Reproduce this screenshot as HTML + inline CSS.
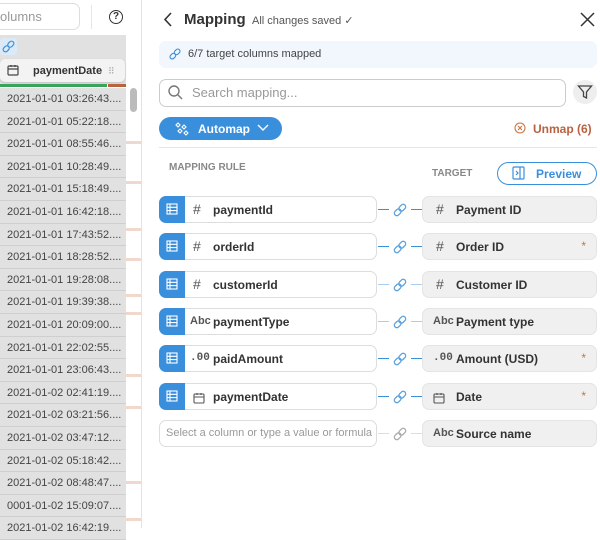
<!DOCTYPE html><html><head><style>
*{box-sizing:border-box;margin:0;padding:0}
body{width:600px;height:528px;overflow:hidden;background:#fff;font-family:"Liberation Sans",sans-serif;position:relative;color:#333}
.a{position:absolute}
.cell{position:absolute;left:0;width:126px;height:22.6px;background:#e1e1e1;border-bottom:1px solid #cfcfcf;font-size:11px;color:#444;padding:5px 0 0 7px;white-space:nowrap;overflow:hidden}
.lb{position:absolute;left:159px;width:218px;height:27px;border:1px solid #ddd;border-radius:7px;background:#fff}
.lb .sq{position:absolute;left:-1px;top:-1px;width:26px;height:27px;background:#3a8fdc;border-radius:7px 0 0 7px}
.ty{position:absolute;font-size:11px;font-weight:bold;color:#555}
.rb{position:absolute;left:422px;width:175px;height:27px;border:1px solid #e4e4e4;border-radius:7px;background:#f0f0f0}
.st{position:absolute;right:10px;top:5px;color:#c8763f;font-size:12px}
.ln{position:absolute;height:1px;background:#3a8fdc}
</style></head><body>
<div class="a" style="left:-20px;top:3px;width:100px;height:27px;border:1px solid #ddd;border-radius:7px"></div>
<div class="a" style="left:0;top:9px;font-size:13px;color:#999">olumns</div>
<div class="a" style="left:91px;top:5px;width:1px;height:24px;background:#e5e5e5"></div>
<div class="a" style="left:109px;top:10px;width:14px;height:14px;border:1.5px solid #333;border-radius:50%;font-size:10px;font-weight:bold;text-align:center;line-height:12px">?</div>
<div class="a" style="left:0;top:35px;width:126px;height:20px;background:#e1e1e1"></div>
<div class="a" style="left:0;top:38px;width:17px;height:17px;background:#dceaf7;border-radius:3px"></div>
<svg class="a" style="left:1px;top:39px" width="15" height="15" viewBox="0 0 16 16" fill="none" stroke="#3a8fdc" stroke-width="1.3"><g transform="rotate(-45 8 8)"><rect x="1" y="5.5" width="7" height="5" rx="2.5"/><rect x="8" y="5.5" width="7" height="5" rx="2.5"/></g></svg>
<div class="a" style="left:0;top:55px;width:126px;height:29px;background:#e1e1e1"></div>
<div class="a" style="left:0;top:59px;width:125px;height:23px;background:#f3f3f3;border-radius:5px;box-shadow:0 1px 2px rgba(0,0,0,.15)"></div>
<svg class="a" style="left:7px;top:64px" width="12" height="12" viewBox="0 0 12 12" fill="none" stroke="#444" stroke-width="1.2"><rect x="1" y="2" width="10" height="9" rx="1"/><path d="M1 5h10M4 1v2M8 1v2"/></svg>
<div class="a" style="left:33px;top:65px;font-size:11px;font-weight:bold;color:#333">paymentDate</div>
<div class="a" style="left:108px;top:66px;color:#aaa;font-size:9px;letter-spacing:-1px">⠿</div>
<div class="a" style="left:0;top:84px;width:107px;height:3px;background:#3aa35b"></div>
<div class="a" style="left:108px;top:84px;width:18px;height:3px;background:#b9623f"></div>
<div class="a" style="left:130px;top:88px;width:7px;height:24px;background:#bbb;border-radius:4px"></div>
<div class="a" style="left:126px;top:141px;width:15px;height:3px;background:#f0d8cc"></div>
<div class="a" style="left:126px;top:181px;width:15px;height:3px;background:#f0d8cc"></div>
<div class="a" style="left:126px;top:228px;width:15px;height:3px;background:#f0d8cc"></div>
<div class="a" style="left:126px;top:258px;width:15px;height:3px;background:#f0d8cc"></div>
<div class="a" style="left:126px;top:294px;width:15px;height:3px;background:#f0d8cc"></div>
<div class="a" style="left:126px;top:312px;width:15px;height:3px;background:#f0d8cc"></div>
<div class="a" style="left:126px;top:374px;width:15px;height:3px;background:#f0d8cc"></div>
<div class="a" style="left:126px;top:406px;width:15px;height:3px;background:#f0d8cc"></div>
<div class="a" style="left:126px;top:481px;width:15px;height:3px;background:#f0d8cc"></div>
<div class="a" style="left:126px;top:518px;width:15px;height:3px;background:#f0d8cc"></div>
<div class="a" style="left:141px;top:0;width:1px;height:528px;background:#e3e3e3"></div>
<div class="cell" style="top:88px">2021-01-01 03:26:43....</div>
<div class="cell" style="top:110.6px">2021-01-01 05:22:18....</div>
<div class="cell" style="top:133.2px">2021-01-01 08:55:46....</div>
<div class="cell" style="top:155.8px">2021-01-01 10:28:49....</div>
<div class="cell" style="top:178.4px">2021-01-01 15:18:49....</div>
<div class="cell" style="top:201px">2021-01-01 16:42:18....</div>
<div class="cell" style="top:223.6px">2021-01-01 17:43:52....</div>
<div class="cell" style="top:246.2px">2021-01-01 18:28:52....</div>
<div class="cell" style="top:268.8px">2021-01-01 19:28:08....</div>
<div class="cell" style="top:291.4px">2021-01-01 19:39:38....</div>
<div class="cell" style="top:314px">2021-01-01 20:09:00....</div>
<div class="cell" style="top:336.6px">2021-01-01 22:02:55....</div>
<div class="cell" style="top:359.2px">2021-01-01 23:06:43....</div>
<div class="cell" style="top:381.8px">2021-01-02 02:41:19....</div>
<div class="cell" style="top:404.4px">2021-01-02 03:21:56....</div>
<div class="cell" style="top:427px">2021-01-02 03:47:12....</div>
<div class="cell" style="top:449.6px">2021-01-02 05:18:42....</div>
<div class="cell" style="top:472.2px">2021-01-02 08:48:47....</div>
<div class="cell" style="top:494.8px">0001-01-02 15:09:07....</div>
<div class="cell" style="top:517.4px">2021-01-02 16:42:19....</div>

<svg class="a" style="left:163px;top:12px" width="10" height="15" viewBox="0 0 10 15" fill="none" stroke="#333" stroke-width="1.6"><path d="M8 1L2 7.5 8 14"/></svg>
<div class="a" style="left:184px;top:11px;font-size:15px;font-weight:bold;color:#333">Mapping</div>
<div class="a" style="left:252px;top:14px;font-size:11px;color:#555">All changes saved ✓</div>
<svg class="a" style="left:580px;top:12px" width="15" height="15" viewBox="0 0 15 15" stroke="#333" stroke-width="1.5"><path d="M1 1l13 13M14 1L1 14"/></svg>
<div class="a" style="left:159px;top:41px;width:438px;height:27px;background:#f1f7fd;border-radius:7px"></div>
<svg class="a" style="left:168px;top:47px" width="14" height="14" viewBox="0 0 16 16" fill="none" stroke="#3a8fdc" stroke-width="1.3"><g transform="rotate(-45 8 8)"><rect x="1" y="5.5" width="7" height="5" rx="2.5"/><rect x="8" y="5.5" width="7" height="5" rx="2.5"/></g></svg>
<div class="a" style="left:188px;top:48px;font-size:11px;color:#444">6/7 target columns mapped</div>
<div class="a" style="left:159px;top:79px;width:407px;height:28px;border:1px solid #ccc;border-radius:7px"></div>
<svg class="a" style="left:167px;top:84px" width="16" height="16" viewBox="0 0 16 16" fill="none" stroke="#777" stroke-width="1.4"><circle cx="7" cy="7" r="5"/><path d="M11 11l4 4"/></svg>
<div class="a" style="left:192px;top:85px;font-size:13px;color:#999">Search mapping...</div>
<div class="a" style="left:573px;top:80px;width:24px;height:24px;border-radius:50%;background:#eee"></div>
<svg class="a" style="left:577px;top:84px" width="16" height="16" viewBox="0 0 16 16" fill="none" stroke="#444" stroke-width="1.3"><path d="M1.5 2h13L9.5 8v6l-3-1.5V8z"/></svg>
<div class="a" style="left:159px;top:117px;width:123px;height:23px;background:#3a8fdc;border-radius:12px"></div>
<svg class="a" style="left:175px;top:122px" width="14" height="14" viewBox="0 0 14 14" fill="none" stroke="#fff" stroke-width="1.1"><path d="M3 1l2 2-2 2-2-2zM9 3l2 2-2 2-2-2zM5 7l2 2-2 2-2-2zM11 9l2 2-2 2-2-2z"/></svg>
<div class="a" style="left:198px;top:122px;font-size:12px;font-weight:bold;color:#fff">Automap</div>
<svg class="a" style="left:257px;top:124px" width="12" height="8" viewBox="0 0 12 8" fill="none" stroke="#fff" stroke-width="1.4"><path d="M1 1l5 5 5-5"/></svg>
<svg class="a" style="left:514px;top:122px" width="12" height="12" viewBox="0 0 12 12" fill="none" stroke="#c8763f" stroke-width="1.1"><circle cx="6" cy="6" r="5"/><path d="M4 4l4 4M8 4l-4 4"/></svg>
<div class="a" style="left:533px;top:122px;font-size:12px;font-weight:bold;color:#b9623f">Unmap (6)</div>
<div class="a" style="left:159px;top:147px;width:438px;height:1px;background:#e5e5e5"></div>
<div class="a" style="left:169px;top:162px;font-size:10px;font-weight:bold;color:#888">MAPPING RULE</div>
<div class="a" style="left:432px;top:168px;font-size:10px;font-weight:bold;color:#888">TARGET</div>
<div class="a" style="left:497px;top:162px;width:100px;height:23px;border:1.5px solid #3a8fdc;border-radius:12px"></div>
<svg class="a" style="left:512px;top:166px" width="13" height="14" viewBox="0 0 13 14" fill="none" stroke="#3a8fdc" stroke-width="1.2"><rect x="1" y="1" width="11" height="12" rx="1"/><path d="M8 1v12M4 5l2 2-2 2"/></svg>
<div class="a" style="left:536px;top:167px;font-size:12px;font-weight:bold;color:#3a8fdc">Preview</div>

<div id="rows"></div>
<script>
const R=[["#","paymentId","#","Payment ID",0,1],["#","orderId","#","Order ID",1,1],["#","customerId","#","Customer ID",0,0],["Abc","paymentType","Abc","Payment type",0,0],[".00","paidAmount",".00","Amount (USD)",1,1],["cal","paymentDate","cal","Date",1,1]];
const cal='<svg width="12" height="12" viewBox="0 0 12 12" fill="none" stroke="#555" stroke-width="1.1"><rect x="1" y="2" width="10" height="9" rx="1"/><path d="M1 5h10M4 1v2M8 1v2"/></svg>';
function ty(s,x,y){if(s=="cal")return `<div class="a" style="left:${x}px;top:${y+1}px">${cal}</div>`;let st=s=="#"?"font-size:14px;font-weight:normal;":"";if(s==".00")st="font-family:'Liberation Mono',monospace;";return `<div class="ty" style="left:${x}px;top:${y}px;${st}">${s}</div>`}
let h="";const link=(y,c)=>`<svg class="a" style="left:392px;top:${y}px" width="16" height="16" viewBox="0 0 16 16" fill="none" stroke="${c}" stroke-width="1.3"><g transform="rotate(-45 8 8)"><rect x="1" y="5.5" width="7.5" height="5" rx="2.5"/><rect x="7.5" y="5.5" width="7.5" height="5" rx="2.5"/></g></svg>`;
R.forEach((r,i)=>{const y=196+i*37.3;const lc=r[5]?"#3a8fdc":"#a9cdee";
h+=`<div class="lb" style="top:${y}px"><div class="sq"><svg style="position:absolute;left:7px;top:7px" width="12" height="12" viewBox="0 0 12 12" fill="none" stroke="#fff" stroke-width="1.1"><rect x="1" y="1" width="10" height="10"/><path d="M1 4.3h10M1 7.6h10M4 1v10"/></svg></div></div>`;
h+=ty(r[0],r[0]=="#"?193:(r[0]=="cal"?193:190),y+(r[0]=="#"?5:7));
h+=`<div class="a" style="left:213px;top:${y+7}px;font-size:12px;font-weight:bold;color:#333">${r[1]}</div>`;
h+=`<div class="ln" style="left:378px;top:${y+13}px;width:11px;background:${lc}"></div><div class="ln" style="left:411px;top:${y+13}px;width:11px;background:${lc}"></div>`+link(y+6,"#5aa0e0");
h+=`<div class="rb" style="top:${y}px">${r[4]?'<div class="st">*</div>':''}</div>`+ty(r[2],r[2]=="#"?436:433,y+(r[2]=="#"?5:7))+`<div class="a" style="left:456px;top:${y+7}px;font-size:12px;font-weight:bold;color:#333">${r[3]}</div>`;});
const y=196+6*37.3;
h+=`<div class="a" style="left:159px;top:${y}px;width:218px;height:27px;border:1px solid #ddd;border-radius:7px"></div><div class="a" style="left:166px;top:${y+7}px;font-size:11px;color:#999">Select a column or type a value or formula</div>`;
h+=`<div class="ln" style="left:378px;top:${y+13}px;width:11px;background:#ddd"></div><div class="ln" style="left:411px;top:${y+13}px;width:11px;background:#ddd"></div>`+link(y+6,"#aaa");
h+=`<div class="rb" style="top:${y}px"></div>`+ty("Abc",433,y+7)+`<div class="a" style="left:456px;top:${y+7}px;font-size:12px;font-weight:bold;color:#333">Source name</div>`;
document.getElementById("rows").innerHTML=h;
</script>
</body></html>
